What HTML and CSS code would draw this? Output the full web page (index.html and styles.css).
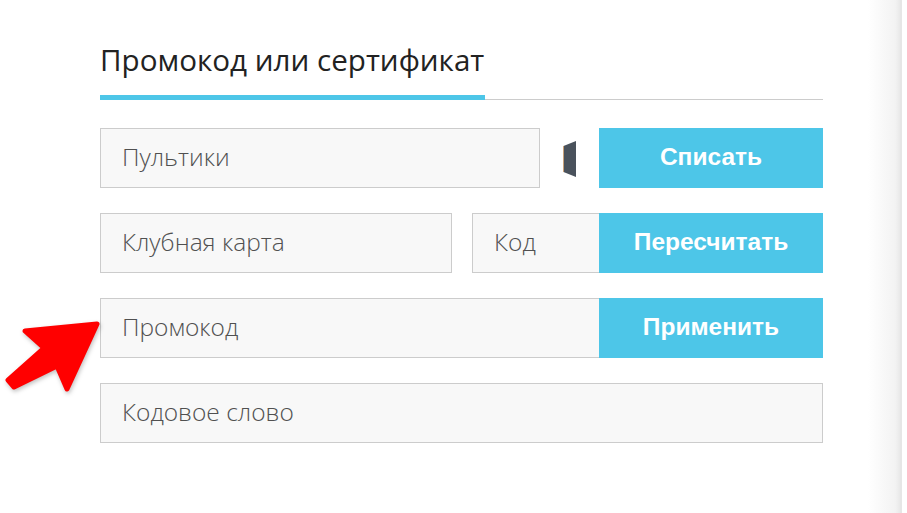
FILE: index.html
```html
<!DOCTYPE html>
<html lang="ru">
<head>
<meta charset="utf-8">
<title>Промокод или сертификат</title>
<link rel="stylesheet" href="styles.css">
</head>
<body>
<div class="page">
  <main class="main">
    <div class="tabs">
      <h2 class="tab">Промокод или сертификат</h2>
    </div>
    <div class="form">
      <div class="row">
        <div class="field w-pult">Пультики</div>
        <div class="icon-slot">
          <svg width="14" height="37" viewBox="0 0 14 37" aria-hidden="true">
            <polygon points="0.5,5 13,0 13,36 0.5,31" fill="#4a525c"/>
            <line x1="0.5" y1="5" x2="0.5" y2="31" stroke="#c9a27a" stroke-width="1"/>
          </svg>
        </div>
        <button class="btn">Списать</button>
      </div>
      <div class="row">
        <div class="field w-club">Клубная карта</div>
        <div class="field w-code">Код</div>
        <button class="btn">Пересчитать</button>
      </div>
      <div class="row">
        <div class="field w-promo">Промокод</div>
        <button class="btn">Применить</button>
      </div>
      <div class="row">
        <div class="field w-full">Кодовое слово</div>
      </div>
    </div>
  </main>
  <div class="edge"></div>
</div>
<svg class="arrow" width="110" height="90" viewBox="0 310 110 90" aria-hidden="true">
  <polygon points="97,324 25,331 44,348 8,380 14,387 57,366 67,389" fill="#ff0000" stroke="#ff0000" stroke-width="5" stroke-linejoin="round"/>
</svg>
</body>
</html>
```

FILE: styles.css
```css
html, body {
  margin: 0;
  padding: 0;
  background: #ffffff;
}

.page {
  display: flex;
  height: 513px;
  position: relative;
}

.main {
  flex: 1;
  padding: 40px 0 0 100px;
}

.tabs {
  width: 723px;
  border-bottom: 1px solid #cccccc;
  display: flex;
}

.tab {
  margin: 0 0 -1px 0;
  width: 385px;
  box-sizing: border-box;
  font-family: "Open Sans", "Liberation Sans", sans-serif;
  font-weight: 400;
  font-size: 29.6px;
  line-height: 40px;
  color: #222222;
  padding-bottom: 15px;
  border-bottom: 5px solid #4dc6e8;
  white-space: nowrap;
}

.form {
  width: 723px;
  padding-top: 28px;
  display: flex;
  flex-direction: column;
  gap: 25px;
}

.row {
  display: flex;
  height: 60px;
}

.field {
  box-sizing: border-box;
  height: 60px;
  background: #f8f8f8;
  border: 1px solid #cccccc;
  padding-left: 21px;
  padding-bottom: 3px;
  display: flex;
  align-items: center;
  font-family: "Open Sans", "Liberation Sans", sans-serif;
  font-weight: 300;
  font-size: 24.5px;
  color: #505050;
}

.w-pult { width: 440px; }
.w-club { width: 352px; margin-right: 20px; }
.w-code { width: 127px; border-right: none; }
.w-promo { width: 499px; border-right: none; }
.w-full { width: 723px; }

.icon-slot {
  flex: 1;
  display: flex;
  align-items: center;
  justify-content: center;
  padding-top: 2px;
}

.btn {
  width: 224px;
  height: 60px;
  border: none;
  margin: 0;
  padding: 0 0 3px 0;
  background: #4dc6e8;
  color: #ffffff;
  font-family: "Liberation Sans", Arial, sans-serif;
  font-weight: 700;
  font-size: 24.5px;
  cursor: pointer;
}

.edge {
  width: 32px;
  margin-right: 5px;
  background: linear-gradient(to right, #ffffff 0%, #f3f3f3 85%, #e9e9e9 100%);
  border-right: 2px solid #e6e6e6;
}

.arrow {
  position: absolute;
  left: 0;
  top: 310px;
  filter: drop-shadow(1px 2px 2px rgba(0, 0, 0, 0.25));
}
```
